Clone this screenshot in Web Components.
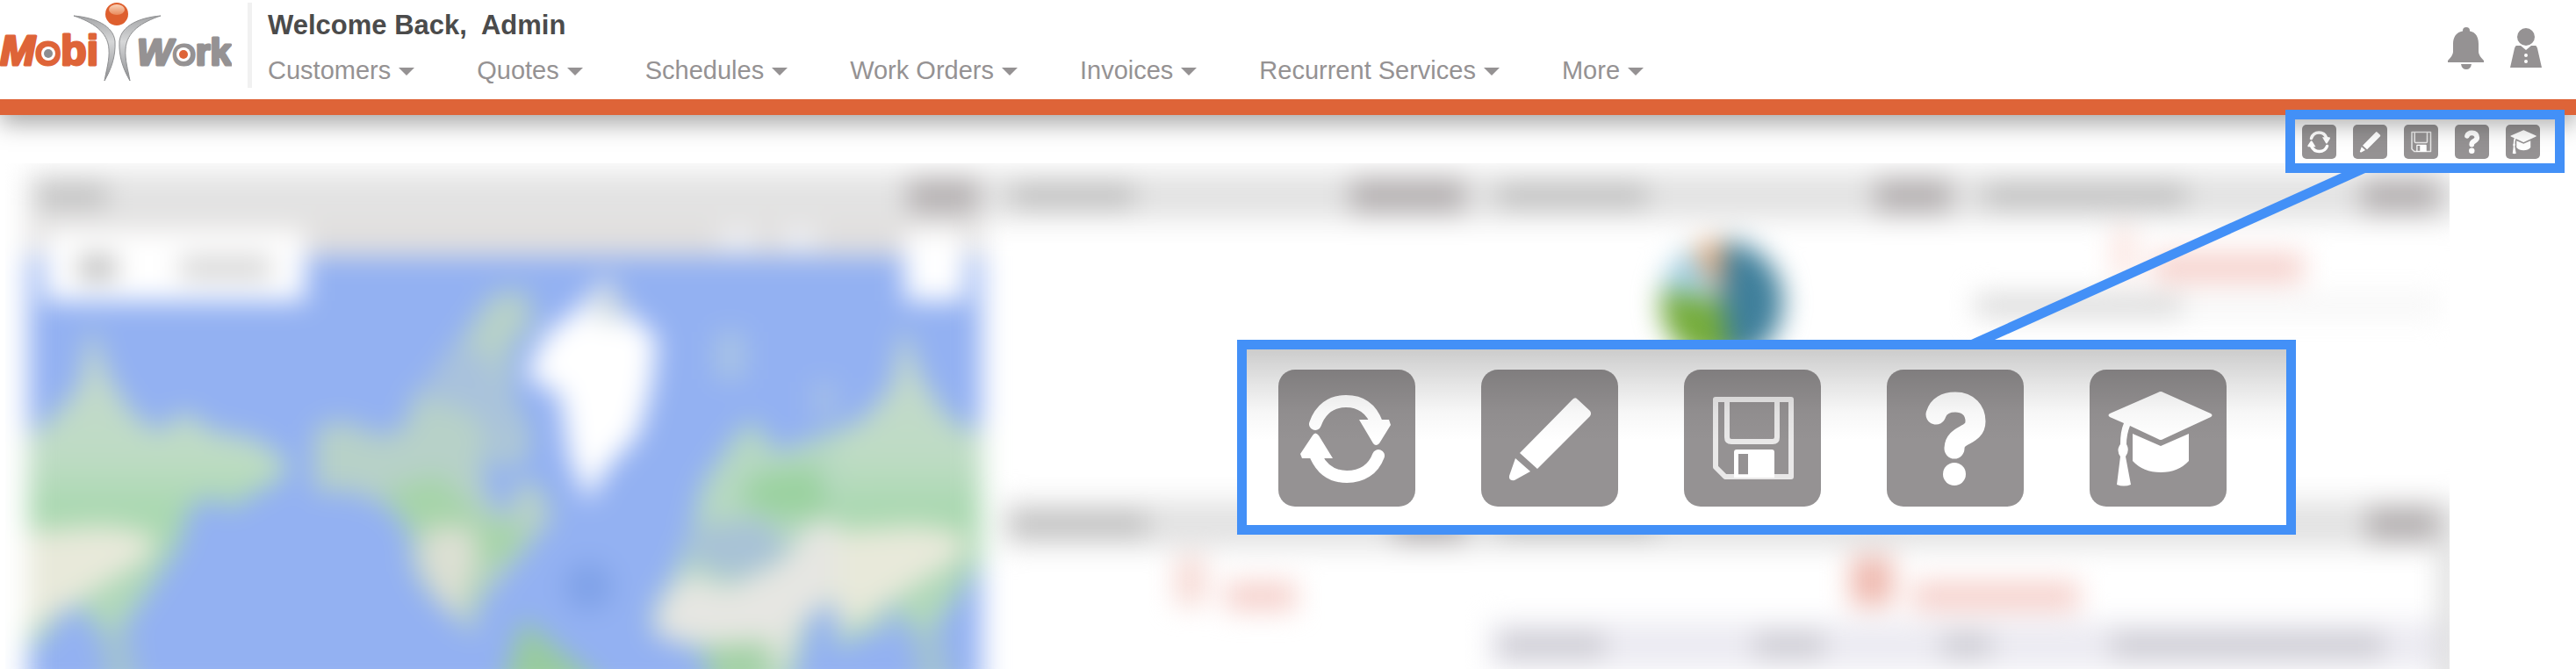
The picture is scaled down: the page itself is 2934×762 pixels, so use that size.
<!DOCTYPE html>
<html lang="en">
<head>
<meta charset="utf-8">
<title>MobiWork</title>
<style>
  html, body { height: 100%; }
  body {
    margin: 0;
    display: flex;
    flex-direction: column;
    position: relative;
    overflow: hidden;
    background: #fff;
    font-family: "Liberation Sans", Arial, Helvetica, sans-serif;
    --grey: #959293;
    --orange: #de6438;
    --blue: #4390f7;
  }
</style>
</head>
<body>
<mw-header>
  <span slot="user">Welcome Back,&nbsp; Admin</span>
  <mw-menu>Customers</mw-menu>
  <mw-menu>Quotes</mw-menu>
  <mw-menu>Schedules</mw-menu>
  <mw-menu>Work Orders</mw-menu>
  <mw-menu>Invoices</mw-menu>
  <mw-menu>Recurrent Services</mw-menu>
  <mw-menu>More</mw-menu>
</mw-header>

<mw-toolbar>
  <mw-tool data-icon="refresh" data-label="Refresh"></mw-tool>
  <mw-tool data-icon="edit" data-label="Edit"></mw-tool>
  <mw-tool data-icon="save" data-label="Save"></mw-tool>
  <mw-tool data-icon="help" data-label="Help"></mw-tool>
  <mw-tool data-icon="training" data-label="Training"></mw-tool>
</mw-toolbar>

<mw-dashboard>
  <mw-panel class="map" data-title="80" data-buttons="80"><mw-map></mw-map></mw-panel>
  <mw-panel data-title="140" data-buttons="130"></mw-panel>
  <mw-panel data-title="170" data-buttons="86"><mw-pie></mw-pie></mw-panel>
  <mw-panel data-title="230" data-buttons="86"><mw-count data-number="24" data-words="170" data-row></mw-count></mw-panel>
  <mw-panel data-title="155" data-buttons="80"><mw-count data-number="36" data-words="80"></mw-count></mw-panel>
  <mw-panel class="wide" data-title="180" data-buttons="80"><mw-count data-number="48" data-words="190" data-table></mw-count></mw-panel>
</mw-dashboard>

<mw-callout>
  <mw-tool data-icon="refresh" data-label="Refresh"></mw-tool>
  <mw-tool data-icon="edit" data-label="Edit"></mw-tool>
  <mw-tool data-icon="save" data-label="Save"></mw-tool>
  <mw-tool data-icon="help" data-label="Help"></mw-tool>
  <mw-tool data-icon="training" data-label="Training"></mw-tool>
</mw-callout>

<script>
// drawn on a 156 x 156 tile
const icons = {
  refresh: `
    <g fill="none" stroke="#fff" stroke-width="14" stroke-linecap="round">
      <path d="M42 62C48 45 60 36 77 36C95 36 106 45 112 61"/>
      <path d="M114 98C108 114 95 122 78 122C61 122 50 114 43 99"/>
    </g>
    <path fill="#fff" d="M92 57H126L128 63L115 84Q111 88 108 84ZM62 101H27L25 96L39 75Q42 70 46 75Z"/>`,
  edit: `
    <path fill="#fff" d="M103 35Q107 30 110 34L124 47Q126 50 124 53L64 113L44 95Z"/>
    <path fill="#fff" d="M39 101L56 116L38 126Q31 127 32 121Z"/>`,
  save: `
    <g fill="none" stroke="#e9e8e8" stroke-width="6" stroke-linejoin="round">
      <path d="M36 34H122V122H47L36 111Z"/>
      <path d="M49 34V77Q49 82 54 82H101Q106 82 106 77V34"/>
    </g>
    <path fill="#fff" fill-rule="evenodd" d="M60 91H100Q103 91 103 94V123H57V94Q57 91 60 91ZM62 96V120H73V96Z"/>`,
  help: `
    <path fill="none" stroke="#fff" stroke-width="23" stroke-linecap="round" d="M56 51C59 41 67 37 78 37C93 37 101 47 101 59C101 77 77 72 77 90"/>
    <circle cx="77" cy="119" r="13" fill="#fff"/>`,
  training: `
    <path fill="#fff" d="M78 26Q81 24 84 26L138 50Q141 52 138 54L84 79Q81 81 78 79L46 64Q42 74 42 85Q46 92 41 99L47 131Q39 134 31 131L35 99Q30 92 35 85Q35 70 39 61L23 54Q20 52 23 50Z"/>
    <path fill="#fff" d="M49 73L81 87L113 73V104Q101 117 81 117Q61 117 49 104Z"/>`
};

const make = (html) => {
  const template = document.createElement("template");
  template.innerHTML = html;
  return template;
};

class MwElement extends HTMLElement {
  constructor() {
    super();
    this.attachShadow({ mode: "open" });
    this.shadowRoot.appendChild(this.constructor.template.content.cloneNode(true));
  }
}

class MwLogo extends MwElement {
  static template = make(`
<style>
  :host { display: block; }
  svg { display: block; }
  text { font-weight: bold; stroke-width: 3px; stroke-linejoin: round; }
</style>
<svg width="264" height="97" viewBox="0 0 264 97" role="img" aria-label="MobiWork">
  <defs>
    <linearGradient id="body" x1="0" y1="0" x2="0" y2="1">
      <stop offset="0" stop-color="#a5a6a8"/>
      <stop offset=".4" stop-color="#d6d7d8"/>
      <stop offset="1" stop-color="#8d8e91"/>
    </linearGradient>
    <linearGradient id="shine" x1="0" y1="0" x2="0" y2="1">
      <stop offset="0" stop-color="#f9d3b9"/>
      <stop offset="1" stop-color="#e98a5c"/>
    </linearGradient>
  </defs>
  <text x="0" y="74" font-size="48" fill="#de6438" stroke="#de6438"><tspan font-style="italic">M</tspan>obi</text>
  <text x="156" y="74" font-size="43" fill="#959293" stroke="#959293"><tspan font-style="italic">W</tspan>ork</text>
  <circle cx="55" cy="61" r="8" fill="#fff"/><circle cx="55" cy="61" r="5" fill="#8d8e91"/>
  <circle cx="209" cy="62" r="8" fill="#fff"/><circle cx="209" cy="62" r="5" fill="#de6438"/>
  <g fill="url(#body)" stroke="#8f9092" stroke-width="1">
    <path d="M84 18C108 20 129 29 131 47C132 65 126 80 119 92C121 80 125 68 124 56C123 36 105 25 84 18Z"/>
    <path d="M183 18C159 20 138 29 136 47C135 65 141 80 148 92C146 80 142 68 143 56C144 36 162 25 183 18Z"/>
  </g>
  <circle cx="133" cy="16" r="13" fill="#de5f2e"/>
  <ellipse cx="133" cy="11" rx="9" ry="6" fill="url(#shine)"/>
</svg>`);
}

class MwMenu extends MwElement {
  static template = make(`
<style>
  :host { display: block; }
  button {
    display: flex;
    align-items: center;
    gap: 9px;
    padding: 0;
    border: 0;
    background: none;
    color: var(--grey);
    font: inherit;
    white-space: nowrap;
    cursor: pointer;
  }
  svg { margin-top: 3px; }
</style>
<button type="button" aria-haspopup="true"><slot></slot><svg width="18" height="9" viewBox="0 0 18 9"><path d="M0 0H18L9 9Z" fill="currentColor"/></svg></button>`);
}

class MwHeader extends MwElement {
  static template = make(`
<style>
  :host {
    display: flex;
    flex: none;
    position: relative;
    z-index: 1;
    background: #fff;
    border-bottom: 18px solid var(--orange);
    box-shadow: 0 10px 26px rgba(0, 0, 0, .34);
  }
  .divider { width: 5px; height: 97px; margin: 3px 18px 13px; background: #f1f1f1; }
  .main { flex: 1; padding-top: 11px; }
  h1 { margin: 0 0 16px; font-size: 31px; line-height: 36px; color: #4b4b4b; }
  nav { display: flex; gap: 71px; font-size: 29px; line-height: 34px; }
  .actions { display: flex; align-items: flex-start; gap: 30px; padding: 31px 39px 0 0; }
  .actions button { padding: 0; border: 0; background: none; color: var(--grey); cursor: pointer; }
  .actions svg { display: block; }
</style>
<mw-logo></mw-logo>
<div class="divider"></div>
<div class="main">
  <h1><slot name="user"></slot></h1>
  <nav><slot></slot></nav>
</div>
<div class="actions">
  <button type="button" aria-label="Notifications">
    <svg width="41" height="49" viewBox="0 0 41 49" fill="currentColor">
      <circle cx="21" cy="4" r="4"/>
      <path d="M6 19C6 9 12 4 21 4S35 9 35 19V28Q35 32 41 38V40H0V38Q6 32 6 28Z"/>
      <path d="M15 42H27Q26 48 21 48T15 42Z"/>
    </svg>
  </button>
  <button type="button" aria-label="Account">
    <svg width="36" height="47" viewBox="0 0 36 47" fill="currentColor">
      <circle cx="18" cy="11" r="10"/>
      <path fill-rule="evenodd" d="M7 21H12L18 26L24 21H29Q30 21 31 24L36 46H0L5 24Q6 21 7 21ZM18 30A2 2 0 1 0 18 34A2 2 0 1 0 18 30ZM18 37A2 2 0 1 0 18 41A2 2 0 1 0 18 37Z"/>
    </svg>
  </button>
</div>`);
}

class MwTool extends MwElement {
  static template = make(`
<style>
  :host { display: block; width: var(--tool-size, 39px); }
  button {
    display: block;
    width: 100%;
    padding: 0;
    border: 0;
    border-radius: var(--tool-radius, 5px);
    background: var(--grey);
    overflow: hidden;
    cursor: pointer;
  }
  svg { display: block; width: 100%; }
</style>
<button type="button"><svg viewBox="0 0 156 156"></svg></button>`);
  connectedCallback() {
    this.shadowRoot.querySelector("button").setAttribute("aria-label", this.dataset.label);
    this.shadowRoot.querySelector("svg").innerHTML = icons[this.dataset.icon];
  }
}

class MwToolbar extends MwElement {
  static template = make(`
<style>
  :host { display: flex; flex: none; justify-content: flex-end; padding: 11px 41px 5px; }
  .tools { display: flex; gap: 19px; position: relative; }
  /* highlight frame, over the header's orange edge */
  .tools::after {
    content: "";
    position: absolute;
    z-index: 2;
    inset: -17px -28px -16px -19px;
    border: 11px solid var(--blue);
    pointer-events: none;
  }
</style>
<div class="tools"><slot></slot></div>`);
}

class MwCallout extends MwElement {
  static template = make(`
<style>
  :host { position: absolute; z-index: 3; top: 387px; right: 319px; }
  .box {
    display: flex;
    gap: 75px;
    position: relative;
    padding: 23px 68px 21px 36px;
    border: 11px solid var(--blue);
    background: #fff;
    --tool-size: 156px;
    --tool-radius: 19px;
  }
  .box::after {
    content: "";
    position: absolute;
    inset: 0;
    background: linear-gradient(rgba(0, 0, 0, .2), rgba(0, 0, 0, .1) 20%, rgba(0, 0, 0, .03) 36%, transparent 52%);
    pointer-events: none;
  }
  .line { position: absolute; right: -80px; bottom: 100%; pointer-events: none; }
</style>
<svg class="line" width="450" height="190" viewBox="0 0 450 190"><path d="M0 190L422 0H449L27 190Z" fill="#4390f7"/></svg>
<div class="box"><slot></slot></div>`);
}

class MwDashboard extends MwElement {
  static template = make(`
<style>
  :host { display: block; flex: 1; min-height: 0; margin: 0 144px 0 6px; overflow: hidden; }
  .grid {
    display: grid;
    grid-template-columns: 41fr 20fr 20fr 20fr;
    grid-template-rows: 374px 240px;
    column-gap: 24px;
    padding: 10px 10px 0 26px;
    filter: blur(15px);
  }
  ::slotted(.map) { grid-row: span 2; }
  ::slotted(.wide) { grid-column: span 2; border-right: 20px solid #d4d4d4; margin-right: -20px; }
</style>
<div class="grid"><slot></slot></div>`);
}

class MwPanel extends MwElement {
  static template = make(`
<style>
  :host { display: flex; flex-direction: column; min-width: 0; }
  header {
    display: flex;
    align-items: center;
    justify-content: space-between;
    height: 54px;
    margin-right: -24px;
    padding: 0 28px 0 10px;
    background: #e3e3e3;
  }
  .title { height: 24px; background: #bdbdbd; }
  .buttons { height: 40px; background: #b6b2b3; }
  .content { flex: 1; }
</style>
<header><div class="title"></div><div class="buttons"></div></header>
<div class="content"><slot></slot></div>`);
  connectedCallback() {
    this.shadowRoot.querySelector(".title").style.width = this.dataset.title + "px";
    this.shadowRoot.querySelector(".buttons").style.width = this.dataset.buttons + "px";
  }
}

class MwCount extends MwElement {
  static template = make(`
<style>
  :host { display: block; }
  .count { display: flex; justify-content: center; align-items: flex-end; gap: 22px; height: 72px; }
  .number { height: 56px; margin-bottom: 6px; background: #f7dcd7; }
  .words { height: 34px; background: #f6d2cd; }
  .row, .table { display: none; align-items: center; }
  :host([data-row]) .row { display: flex; height: 28px; margin-top: 12px; background: #f7f7f7; }
  :host([data-row]) .row i { width: 235px; height: 22px; background: #d6d6d6; }
  :host([data-row]) .number { background: #fbe3de; }
  :host([data-table]) .number { background: #efbab0; }
  :host([data-table]) .table { display: grid; grid-template-columns: 27fr 20fr 18fr 35fr; height: 54px; margin-top: 12px; padding-left: 12px; background: #ecebf2; }
  .table i { height: 28px; background: #cdccd3; }
  .table i:nth-child(1) { width: 120px; }
  .table i:nth-child(2) { width: 80px; }
  .table i:nth-child(3) { width: 56px; }
  .table i:nth-child(4) { width: 310px; }
</style>
<div class="count"><div class="number"></div><div class="words"></div></div>
<div class="row"><i></i></div>
<div class="table"><i></i><i></i><i></i><i></i></div>`);
  connectedCallback() {
    this.shadowRoot.querySelector(".number").style.width = this.dataset.number + "px";
    this.shadowRoot.querySelector(".words").style.width = this.dataset.words + "px";
  }
}

class MwPie extends MwElement {
  static template = make(`
<style>
  :host { display: flex; justify-content: center; padding-top: 24px; }
</style>
<svg width="140" height="140" viewBox="-70 -70 140 140">
  <circle r="70" fill="#3f7f9b"/>
  <path d="M0 0L10 69A70 70 0 0 1 -68 -14Z" fill="#76ad3b"/>
  <path d="M0 0L-68 -14A70 70 0 0 1 -32 -62Z" fill="#a2cfe2"/>
  <path d="M0 0L-32 -62A70 70 0 0 1 2 -70Z" fill="#efae7c"/>
</svg>`);
}

class MwMap extends MwElement {
  static template = make(`
<style>
  :host { display: block; height: 540px; }
  svg { display: block; width: 100%; height: 100%; }
</style>
<svg viewBox="32 250 1086 540" preserveAspectRatio="none">
  <defs>
    <linearGradient id="land" gradientUnits="userSpaceOnUse" x1="0" y1="430" x2="0" y2="740">
      <stop offset="0" stop-color="#c3d9cb"/>
      <stop offset=".3" stop-color="#bedcc4"/>
      <stop offset=".5" stop-color="#a8d8af"/>
      <stop offset="1" stop-color="#b4d8bf"/>
    </linearGradient>
    <g id="asia">
      <path d="M28 500L60 475L90 440L104 370L122 425L150 470L180 492L210 468L240 490L290 500L328 525L322 545L280 568L262 580L240 565L215 580L205 620L185 650L165 680L140 715L110 715L90 690L70 700L50 730L28 740Z" fill="url(#land)"/>
      <path d="M28 605L120 598L175 608L170 635L120 665L80 690L28 720Z" fill="#e8e9da"/>
      <path d="M110 715L145 715L160 790L125 790Z" fill="#a3c3d0"/>
    </g>
  </defs>
  <rect x="32" y="250" width="1086" height="540" fill="#93b1f2"/>
  <rect x="32" y="240" width="1086" height="52" fill="#e1dfde"/>
  <rect x="820" y="262" width="40" height="20" fill="#f2f4f8"/>
  <rect x="890" y="262" width="40" height="20" fill="#f2f4f8"/>
  <rect x="50" y="262" width="298" height="81" fill="#fff"/>
  <rect x="90" y="292" width="42" height="26" fill="#b8b8b8"/>
  <rect x="205" y="292" width="104" height="26" fill="#d4d4d4"/>
  <rect x="1030" y="262" width="70" height="81" fill="#fff"/>
  <use href="#asia"/>
  <path d="M358 490L385 478L440 498L465 480L470 450L490 430L530 380L560 335L598 330L608 365L580 400L580 450L600 490L600 520L572 535L550 510L552 560L575 590L592 545L615 555L630 590L600 625L570 660L545 690L540 725L520 705L490 680L470 650L465 605L440 575L400 560L358 560Z" fill="#b7d1c8"/>
  <path d="M470 450L490 430L530 390L560 410L590 500L570 530L540 470Z" fill="#a9c2dc"/>
  <path d="M435 560L500 540L550 590L600 600L590 630L550 650L540 690L490 640L465 600Z" fill="#a6d4a9"/>
  <path d="M485 600L540 600L545 640L520 705L500 680L478 640Z" fill="#dcdfd3"/>
  <path d="M692 312L714 355L748 385L742 440L727 495L690 535L670 572L648 520L638 450L598 428L622 380L655 355Z" fill="#fff"/>
  <path d="M692 312L717 360L690 368L670 352Z" fill="#d0dbe2"/>
  <circle cx="670" cy="668" r="28" fill="#80a2e8"/>
  <path d="M815 378H848V432H815Z" fill="#a9c4e4"/>
  <path d="M925 435H952V475H925Z" fill="#a5bfe6"/>
  <path d="M835 500L855 478L885 515L925 500L980 480L1010 470V720L980 720L950 690L925 700L900 790H870L850 740H790L742 720L745 690L770 650L785 610L800 550Z" fill="#b6d8c2"/>
  <path d="M860 540L930 530L950 590L880 590L840 570Z" fill="#9bd2a0"/>
  <path d="M790 600L870 590L900 630L840 660L785 640Z" fill="#a8c2d6"/>
  <path d="M780 655L830 670L890 640L930 590L985 600L1000 690L950 680L910 710L890 762L810 735L748 725L750 690Z" fill="#e6e6e2"/>
  <path d="M800 735L880 730L870 790H810Z" fill="#a3d1a6"/>
  <use href="#asia" x="925"/>
  <path d="M595 705L625 730L680 775L690 790H570Z" fill="#98cb9e"/>
</svg>`);
}

customElements.define("mw-logo", MwLogo);
customElements.define("mw-menu", MwMenu);
customElements.define("mw-header", MwHeader);
customElements.define("mw-tool", MwTool);
customElements.define("mw-toolbar", MwToolbar);
customElements.define("mw-callout", MwCallout);
customElements.define("mw-dashboard", MwDashboard);
customElements.define("mw-panel", MwPanel);
customElements.define("mw-count", MwCount);
customElements.define("mw-pie", MwPie);
customElements.define("mw-map", MwMap);
</script>
</body>
</html>
